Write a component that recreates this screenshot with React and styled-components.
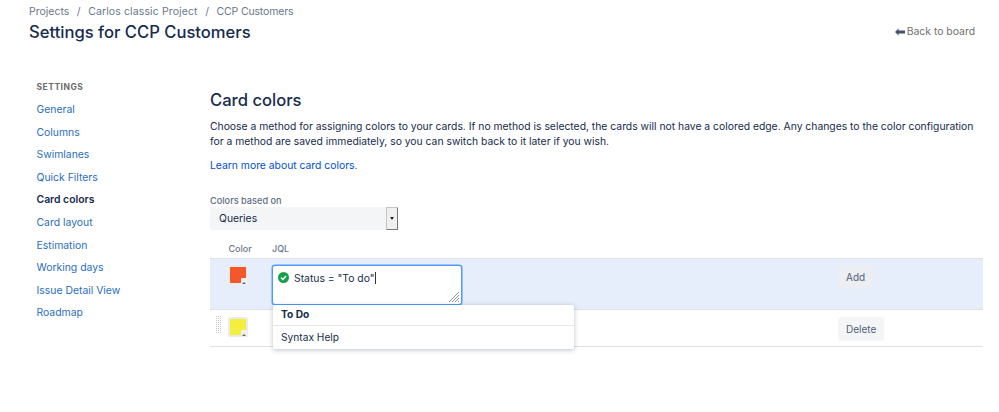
import React from "react";
import styled, { createGlobalStyle } from "styled-components";

const GlobalStyle = createGlobalStyle`
  html, body {
    margin: 0;
    padding: 0;
    background: #fff;
    font-family: "Inter", "Liberation Sans", sans-serif;
    color: #172b4d;
    overflow: hidden;
  }
`;

const Page = styled.div`
  width: 999px;
  height: 412px;
  position: relative;
  overflow: hidden;
`;

const Header = styled.header`
  display: flex;
  justify-content: space-between;
  align-items: flex-start;
  box-sizing: border-box;
  padding: 5px 24px 0 29px;
  height: 45px;
`;

const Crumbs = styled.div`
  display: flex;
  gap: 7.5px;
  font-size: 10.5px;
  line-height: 13px;
  color: #6b778c;
`;

const Crumb = styled.span`
  letter-spacing: ${(p) => p.$track || 0}px;
`;

const Title = styled.h1`
  margin: 3px 0 0;
  font-size: 16.6px;
  line-height: 22px;
  font-weight: 500;
  color: #172b4d;
`;

const BackLink = styled.a`
  display: flex;
  align-items: center;
  gap: 2px;
  margin-top: 20px;
  font-size: 10.4px;
  line-height: 14px;
  color: #707070;
`;

const Body = styled.div`
  display: flex;
  padding: 37px 16px 0 36.5px;
`;

const Sidebar = styled.nav`
  width: 173.5px;
  flex: none;
`;

const SideHeading = styled.div`
  font-size: 8.5px;
  line-height: 10px;
  font-weight: 700;
  letter-spacing: 0.5px;
  color: #6b6b6b;
  margin: 0 0 7px;
`;

const SideItem = styled.a`
  display: block;
  font-size: 10.4px;
  line-height: 22.6px;
  color: ${(p) => (p.$active ? "#172b4d" : "#2a6ebb")};
  font-weight: ${(p) => (p.$active ? 600 : 400)};
`;

const Main = styled.main`
  flex: 1;
  min-width: 0;
  padding-top: 7px;
`;

const Heading = styled.h2`
  margin: 0;
  font-size: 16.6px;
  line-height: 22px;
  font-weight: 500;
  color: #172b4d;
`;

const Intro = styled.p`
  margin: 8px 0 0;
  font-size: 10.35px;
  line-height: 15px;
  color: #172b4d;
`;

const LearnMore = styled.a`
  display: block;
  margin-top: 8px;
  font-size: 10.35px;
  line-height: 16px;
  color: #0052cc;
`;

const FieldLabel = styled.label`
  display: block;
  margin-top: 22px;
  font-size: 9.2px;
  line-height: 12px;
  font-weight: 500;
  color: #5e6c84;
`;

const SelectBox = styled.div`
  display: flex;
  width: 188px;
  height: 23px;
  background: #f4f5f7;
  border-radius: 3px;
  align-items: stretch;
`;

const SelectValue = styled.span`
  flex: 1;
  padding-left: 9px;
  font-size: 10.35px;
  line-height: 22px;
  color: #172b4d;
`;

const SelectArrow = styled.span`
  width: 12px;
  display: flex;
  align-items: center;
  justify-content: center;
  background: #f0f0f0;
  border: 1px solid #c4c4c4;
  border-right-color: #777;
  border-bottom-color: #777;
  border-radius: 1px;
  box-sizing: border-box;
  &::after {
    content: "";
    border-left: 2.5px solid transparent;
    border-right: 2.5px solid transparent;
    border-top: 3px solid #222;
  }
`;

const Grid = styled.div`
  margin-top: 11px;
  position: relative;
`;

const HeadRow = styled.div`
  display: grid;
  grid-template-columns: 62px 1fr;
  box-sizing: border-box;
  height: 17px;
  padding-top: 1px;
  font-size: 9px;
  line-height: 14px;
  font-weight: 500;
  color: #6b778c;
  span:first-child {
    padding-left: 18.5px;
  }
`;

const Row = styled.div`
  display: grid;
  grid-template-columns: 62px 566px 1fr;
  height: ${(p) => p.$h}px;
  box-sizing: border-box;
  background: ${(p) => (p.$active ? "#e6edfb" : "#fff")};
  border-top: ${(p) => (p.$active ? "1px solid #dfe1e6" : "none")};
  border-bottom: 1px solid #dfe1e6;
`;

const ColorCell = styled.div`
  display: flex;
  align-items: flex-start;
  padding: ${(p) => p.$top}px 0 0 18px;
  position: relative;
`;

const Grip = styled.svg`
  position: absolute;
  left: 6px;
  top: 6px;
`;

const Swatch = styled.div`
  width: 20px;
  height: 20px;
  box-sizing: border-box;
  border: 2px solid #e9ebf0;
  border-radius: 2px;
  background: ${(p) => p.$color};
  position: relative;
  &::after {
    content: "";
    position: absolute;
    right: -2px;
    bottom: -2px;
    width: 7px;
    height: 7px;
    background: #eef0f3;
    border-radius: 1px 0 0 0;
  }
  &::before {
    content: "";
    position: absolute;
    right: 0;
    bottom: -1px;
    z-index: 1;
    border-left: 2px solid transparent;
    border-right: 2px solid transparent;
    border-bottom: 2px solid #666;
  }
`;

const EditorCell = styled.div`
  padding-top: 6px;
`;

const Editor = styled.div`
  width: 190px;
  height: 40px;
  box-sizing: border-box;
  background: #fff;
  border: 1px solid #4c9aff;
  border-radius: 3px;
  box-shadow: 0 0 0 0.5px #4c9aff;
  padding: 5px 5px;
  display: flex;
  align-items: flex-start;
  gap: 5px;
  position: relative;
  font-size: 10.35px;
  line-height: 14px;
  color: #172b4d;
`;

const Caret = styled.span`
  display: inline-block;
  width: 1px;
  height: 12px;
  background: #333;
  vertical-align: -2px;
`;

const Resizer = styled.svg`
  position: absolute;
  right: 1px;
  bottom: 1px;
`;

const ActionCell = styled.div`
  padding-top: ${(p) => p.$top}px;
`;

const ActionButton = styled.button`
  height: 24px;
  padding: 0 8px;
  border: none;
  border-radius: 3px;
  background: ${(p) => (p.$active ? "#eceef2" : "#f4f5f7")};
  font-family: inherit;
  font-size: 10px;
  color: #505f79;
`;

const Suggestions = styled.div`
  position: absolute;
  left: 63px;
  top: 64px;
  width: 301px;
  background: #fff;
  border-radius: 2px;
  box-shadow: 0 1px 5px rgba(9, 30, 66, 0.28);
  z-index: 3;
`;

const Suggestion = styled.div`
  height: ${(p) => p.$h}px;
  box-sizing: border-box;
  display: flex;
  align-items: center;
  padding: 0 0 2px 8px;
  font-size: 10.2px;
  font-weight: ${(p) => (p.$bold ? 700 : 400)};
  color: #172b4d;
  border-bottom: ${(p) => (p.$bold ? "1px solid #e4e6ea" : "none")};
`;

const CheckIcon = () => (
  <svg width="11" height="11" viewBox="0 0 11 11" style={{ flex: "none", marginTop: 1 }}>
    <circle cx="5.5" cy="5.5" r="5.5" fill="#14a04a" />
    <path d="M3 5.6 L4.9 7.4 L8 3.9" fill="none" stroke="#fff" strokeWidth="1.5" />
  </svg>
);

const BackArrow = () => (
  <svg width="10" height="8" viewBox="0 0 10 8">
    <path d="M0 4 L3.6 0.5 V2.4 H10 V5.6 H3.6 V7.5 Z" fill="#42526e" />
  </svg>
);

const links = ["General", "Columns", "Swimlanes", "Quick Filters", "Card colors", "Card layout", "Estimation", "Working days", "Issue Detail View", "Roadmap"];

export default function App() {
  return (
    <Page>
      <GlobalStyle />
      <Header>
        <div>
          <Crumbs>
            <Crumb>Projects</Crumb>
            <Crumb>/</Crumb>
            <Crumb $track={0.12}>Carlos classic Project</Crumb>
            <Crumb>/</Crumb>
            <Crumb $track={-0.15}>CCP Customers</Crumb>
          </Crumbs>
          <Title>Settings for CCP Customers</Title>
        </div>
        <BackLink>
          <BackArrow />
          Back to board
        </BackLink>
      </Header>
      <Body>
        <Sidebar>
          <SideHeading>SETTINGS</SideHeading>
          {links.map((l) => (
            <SideItem key={l} $active={l === "Card colors"}>
              {l}
            </SideItem>
          ))}
        </Sidebar>
        <Main>
          <Heading>Card colors</Heading>
          <Intro>
            Choose a method for assigning colors to your cards. If no method is selected, the cards will not have a colored edge. Any changes to the color configuration for a method are saved immediately, so you can switch back to it later if you wish.
          </Intro>
          <LearnMore>Learn more about card colors.</LearnMore>
          <FieldLabel>Colors based on</FieldLabel>
          <SelectBox>
            <SelectValue>Queries</SelectValue>
            <SelectArrow />
          </SelectBox>
          <Grid>
            <HeadRow>
              <span>Color</span>
              <span>JQL</span>
            </HeadRow>
            <Row $active $h={52}>
              <ColorCell $top={6}>
                <Swatch $color="#f4582a" />
              </ColorCell>
              <EditorCell>
                <Editor>
                  <CheckIcon />
                  <span>
                    Status = "To do"<Caret />
                  </span>
                  <Resizer width="12" height="12" viewBox="0 0 12 12">
                    <path d="M1 11 L11 1 M4 11 L11 4 M7 11 L11 7 M10 11 L11 10" stroke="#777" strokeWidth="0.8" />
                  </Resizer>
                </Editor>
              </EditorCell>
              <ActionCell $top={6}>
                <ActionButton $active>Add</ActionButton>
              </ActionCell>
            </Row>
            <Row $h={37}>
              <ColorCell $top={7}>
                <Grip width="6" height="18" viewBox="0 0 6 18">
                  <defs>
                    <pattern id="grip" width="2" height="2" patternUnits="userSpaceOnUse">
                      <rect width="1" height="1" fill="#c4c7cd" />
                    </pattern>
                  </defs>
                  <rect width="6" height="18" fill="url(#grip)" />
                </Grip>
                <Swatch $color="#f4ee3c" />
              </ColorCell>
              <div />
              <ActionCell $top={7}>
                <ActionButton>Delete</ActionButton>
              </ActionCell>
            </Row>
            <Suggestions>
              <Suggestion $bold $h={21}>To Do</Suggestion>
              <Suggestion $h={23}>Syntax Help</Suggestion>
            </Suggestions>
          </Grid>
        </Main>
      </Body>
    </Page>
  );
}
